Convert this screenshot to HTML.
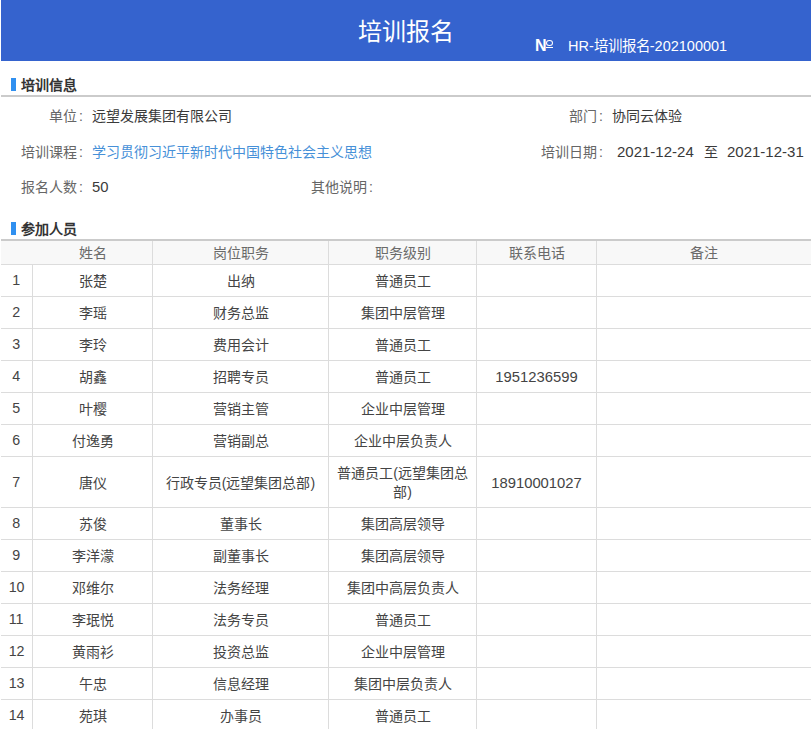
<!DOCTYPE html>
<html lang="zh-CN"><head><meta charset="utf-8"><title>培训报名</title>
<style>
*{margin:0;padding:0;box-sizing:border-box}
div{white-space:nowrap}
html,body{width:812px;height:729px;overflow:hidden;background:#fff}
body{font-family:"Liberation Sans",sans-serif;font-size:14px;color:#333;position:relative}
.abs{position:absolute;white-space:nowrap}
.hdr{position:absolute;left:1px;top:0;width:810px;height:61px;background:#3563CE}
.title{position:absolute;left:0;width:810px;top:16px;text-align:center;color:#fff;font-size:24px;line-height:32px}
.no{position:absolute;left:535px;top:37px;color:#fff;font-size:14.5px;line-height:18px}
.nN{position:absolute;left:534px;top:37px;color:#fff;font-weight:bold;font-size:16px;line-height:18px}
.nO{position:absolute;left:545px;top:40px;width:6.5px;height:5.8px;border:1.5px solid #fff;border-radius:50%}
.nU{position:absolute;left:545px;top:47px;width:7px;height:1.2px;background:#fff}
.mk{position:absolute;left:11px;width:5px;height:13px;background:#3090F0}
.sec{position:absolute;left:21px;font-weight:bold;font-size:14px;line-height:16px;color:#333}
.ln{position:absolute;left:1px;width:810px;height:2px;background:#CBCBCB}
.lbl{position:absolute;text-align:right;color:#666;line-height:20px}
.val{position:absolute;color:#3a3a3a;line-height:20px}
.c{display:inline-block;width:14px;text-align:left;padding-left:2px}
.lnk{color:#4690D8}
.th{position:absolute;top:241px;height:23px;background:#F8F8F8;left:1px;width:810px}
.hl{position:absolute;left:1px;width:810px;height:1px;background:#DCDCDC}
.vl{position:absolute;width:1px;background:#DCDCDC}
.cell{position:absolute;text-align:center;line-height:19px;color:#444}
.hc{color:#6a6a6a}
.num{font-size:14.8px}
.dt{font-size:15px}
.idx{font-size:15.5px}
.idx span{display:inline-block;transform:scaleX(0.92);position:relative;top:-2px}
</style></head><body>
<div class="hdr">
 <div class="title">培训报名</div>
 <div class="nN">N</div><div class="nO"></div><div class="nU"></div>
 <div class="no" style="left:567px">HR-培训报名-202100001</div>
</div>
<div class="mk" style="top:78px"></div>
<div class="sec" style="top:77px">培训信息</div>
<div class="ln" style="top:95px"></div>

<div class="lbl" style="left:0;width:91px;top:106px">单位<span class="c">:</span></div>
<div class="val" style="left:92px;top:106px">远望发展集团有限公司</div>
<div class="lbl" style="left:500px;width:111px;top:106px">部门<span class="c">:</span></div>
<div class="val" style="left:612px;top:106px">协同云体验</div>

<div class="lbl" style="left:0;width:91px;top:142px">培训课程<span class="c">:</span></div>
<div class="val lnk" style="left:92px;top:142px">学习贯彻习近平新时代中国特色社会主义思想</div>
<div class="lbl" style="left:500px;width:111px;top:142px">培训日期<span class="c">:</span></div>
<div class="val dt" style="left:617px;top:142px">2021-12-24</div>
<div class="val" style="left:704px;top:142px">至</div>
<div class="val dt" style="left:727px;top:142px">2021-12-31</div>

<div class="lbl" style="left:0;width:91px;top:177px">报名人数<span class="c">:</span></div>
<div class="val num" style="left:92px;top:177px">50</div>
<div class="lbl" style="left:250px;width:131px;top:177px">其他说明<span class="c">:</span></div>

<div class="mk" style="top:222px"></div>
<div class="sec" style="top:221px">参加人员</div>
<div class="ln" style="top:239px"></div>
<div class="th"></div>

<div class="cell hc" style="left:33px;width:119px;top:244px">姓名</div>
<div class="cell hc" style="left:153px;width:175px;top:244px">岗位职务</div>
<div class="cell hc" style="left:329px;width:147px;top:244px">职务级别</div>
<div class="cell hc" style="left:477px;width:119px;top:244px">联系电话</div>
<div class="cell hc" style="left:597px;width:214px;top:244px">备注</div>
<div class="vl" style="left:152px;top:241px;height:23px"></div>
<div class="vl" style="left:328px;top:241px;height:23px"></div>
<div class="vl" style="left:476px;top:241px;height:23px"></div>
<div class="vl" style="left:596px;top:241px;height:23px"></div>
<div class="hl" style="top:264px"></div>
<div class="cell idx" style="left:1px;width:31px;top:272px"><span>1</span></div>
<div class="cell" style="left:33px;width:119px;top:272px">张楚</div>
<div class="cell" style="left:153px;width:175px;top:272px">出纳</div>
<div class="cell" style="left:329px;width:147px;top:272px">普通员工</div>
<div class="cell" style="left:477px;width:119px;top:272px"></div>
<div class="hl" style="top:296px"></div>
<div class="cell idx" style="left:1px;width:31px;top:304px"><span>2</span></div>
<div class="cell" style="left:33px;width:119px;top:304px">李瑶</div>
<div class="cell" style="left:153px;width:175px;top:304px">财务总监</div>
<div class="cell" style="left:329px;width:147px;top:304px">集团中层管理</div>
<div class="cell" style="left:477px;width:119px;top:304px"></div>
<div class="hl" style="top:328px"></div>
<div class="cell idx" style="left:1px;width:31px;top:336px"><span>3</span></div>
<div class="cell" style="left:33px;width:119px;top:336px">李玲</div>
<div class="cell" style="left:153px;width:175px;top:336px">费用会计</div>
<div class="cell" style="left:329px;width:147px;top:336px">普通员工</div>
<div class="cell" style="left:477px;width:119px;top:336px"></div>
<div class="hl" style="top:360px"></div>
<div class="cell idx" style="left:1px;width:31px;top:368px"><span>4</span></div>
<div class="cell" style="left:33px;width:119px;top:368px">胡鑫</div>
<div class="cell" style="left:153px;width:175px;top:368px">招聘专员</div>
<div class="cell" style="left:329px;width:147px;top:368px">普通员工</div>
<div class="cell num" style="left:477px;width:119px;top:368px">1951236599</div>
<div class="hl" style="top:392px"></div>
<div class="cell idx" style="left:1px;width:31px;top:400px"><span>5</span></div>
<div class="cell" style="left:33px;width:119px;top:400px">叶樱</div>
<div class="cell" style="left:153px;width:175px;top:400px">营销主管</div>
<div class="cell" style="left:329px;width:147px;top:400px">企业中层管理</div>
<div class="cell" style="left:477px;width:119px;top:400px"></div>
<div class="hl" style="top:424px"></div>
<div class="cell idx" style="left:1px;width:31px;top:432px"><span>6</span></div>
<div class="cell" style="left:33px;width:119px;top:432px">付逸勇</div>
<div class="cell" style="left:153px;width:175px;top:432px">营销副总</div>
<div class="cell" style="left:329px;width:147px;top:432px">企业中层负责人</div>
<div class="cell" style="left:477px;width:119px;top:432px"></div>
<div class="hl" style="top:456px"></div>
<div class="cell idx" style="left:1px;width:31px;top:474px"><span>7</span></div>
<div class="cell" style="left:33px;width:119px;top:474px">唐仪</div>
<div class="cell" style="left:153px;width:175px;top:474px">行政专员(远望集团总部)</div>
<div class="cell" style="left:329px;width:147px;top:464px">普通员工(远望集团总<br>部)</div>
<div class="cell num" style="left:477px;width:119px;top:474px">18910001027</div>
<div class="hl" style="top:507px"></div>
<div class="cell idx" style="left:1px;width:31px;top:515px"><span>8</span></div>
<div class="cell" style="left:33px;width:119px;top:515px">苏俊</div>
<div class="cell" style="left:153px;width:175px;top:515px">董事长</div>
<div class="cell" style="left:329px;width:147px;top:515px">集团高层领导</div>
<div class="cell" style="left:477px;width:119px;top:515px"></div>
<div class="hl" style="top:539px"></div>
<div class="cell idx" style="left:1px;width:31px;top:547px"><span>9</span></div>
<div class="cell" style="left:33px;width:119px;top:547px">李洋濛</div>
<div class="cell" style="left:153px;width:175px;top:547px">副董事长</div>
<div class="cell" style="left:329px;width:147px;top:547px">集团高层领导</div>
<div class="cell" style="left:477px;width:119px;top:547px"></div>
<div class="hl" style="top:571px"></div>
<div class="cell idx" style="left:1px;width:31px;top:579px"><span>10</span></div>
<div class="cell" style="left:33px;width:119px;top:579px">邓维尔</div>
<div class="cell" style="left:153px;width:175px;top:579px">法务经理</div>
<div class="cell" style="left:329px;width:147px;top:579px">集团中高层负责人</div>
<div class="cell" style="left:477px;width:119px;top:579px"></div>
<div class="hl" style="top:603px"></div>
<div class="cell idx" style="left:1px;width:31px;top:611px"><span>11</span></div>
<div class="cell" style="left:33px;width:119px;top:611px">李珉悦</div>
<div class="cell" style="left:153px;width:175px;top:611px">法务专员</div>
<div class="cell" style="left:329px;width:147px;top:611px">普通员工</div>
<div class="cell" style="left:477px;width:119px;top:611px"></div>
<div class="hl" style="top:635px"></div>
<div class="cell idx" style="left:1px;width:31px;top:643px"><span>12</span></div>
<div class="cell" style="left:33px;width:119px;top:643px">黄雨衫</div>
<div class="cell" style="left:153px;width:175px;top:643px">投资总监</div>
<div class="cell" style="left:329px;width:147px;top:643px">企业中层管理</div>
<div class="cell" style="left:477px;width:119px;top:643px"></div>
<div class="hl" style="top:667px"></div>
<div class="cell idx" style="left:1px;width:31px;top:675px"><span>13</span></div>
<div class="cell" style="left:33px;width:119px;top:675px">午忠</div>
<div class="cell" style="left:153px;width:175px;top:675px">信息经理</div>
<div class="cell" style="left:329px;width:147px;top:675px">集团中层负责人</div>
<div class="cell" style="left:477px;width:119px;top:675px"></div>
<div class="hl" style="top:699px"></div>
<div class="cell idx" style="left:1px;width:31px;top:707px"><span>14</span></div>
<div class="cell" style="left:33px;width:119px;top:707px">苑琪</div>
<div class="cell" style="left:153px;width:175px;top:707px">办事员</div>
<div class="cell" style="left:329px;width:147px;top:707px">普通员工</div>
<div class="cell" style="left:477px;width:119px;top:707px"></div>
<div class="hl" style="top:731px"></div>
<div class="vl" style="left:32px;top:264px;height:465px"></div>
<div class="vl" style="left:152px;top:264px;height:465px"></div>
<div class="vl" style="left:328px;top:264px;height:465px"></div>
<div class="vl" style="left:476px;top:264px;height:465px"></div>
<div class="vl" style="left:596px;top:264px;height:465px"></div>
</body></html>
